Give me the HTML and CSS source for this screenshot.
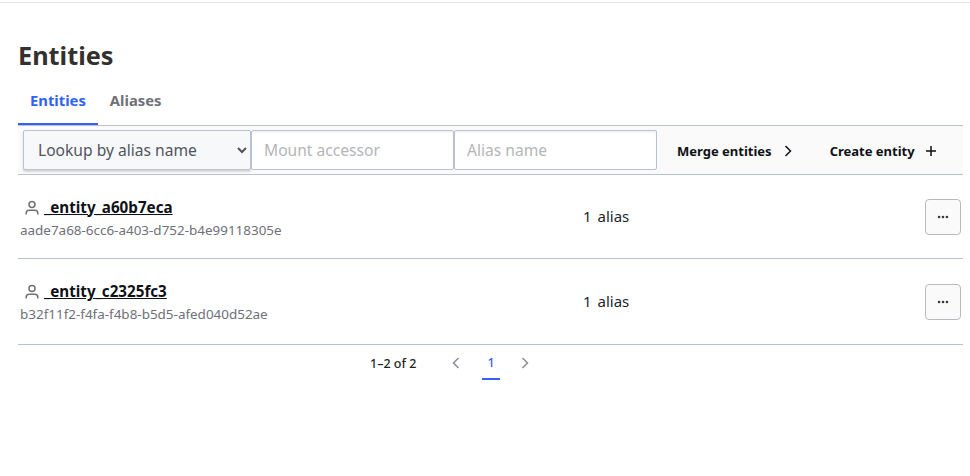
FILE: index.html
```html
<!DOCTYPE html>
<html lang="en">
<head>
<meta charset="utf-8">
<title>Entities</title>
<link rel="stylesheet" href="styles.css">
</head>
<body>
<main class="page">
  <h1 class="title">Entities</h1>
  <nav class="tabs">
    <a class="tab active">Entities</a>
    <a class="tab">Aliases</a>
  </nav>
  <div class="toolbar">
    <div class="filters">
      <select class="lookup"><option>Lookup by alias name</option></select>
      <input class="field" placeholder="Mount accessor">
      <input class="field" placeholder="Alias name">
    </div>
    <button class="action merge">Merge entities
      <svg class="action-icon" viewBox="0 0 16 16"><path d="M5.500 3l5 5-5 5" fill="none" stroke="currentColor" stroke-width="1.500"/></svg>
    </button>
    <button class="action create">Create entity
      <svg class="action-icon" viewBox="0 0 16 16"><path d="M8 3v10M3 8h10" fill="none" stroke="currentColor" stroke-width="1.500"/></svg>
    </button>
  </div>
  <div class="row">
    <div class="identity">
      <div class="name-line">
        <svg class="user" viewBox="0 0 16 16"><circle cx="8" cy="4.600" r="3" fill="none" stroke="currentColor" stroke-width="1.500"/><path d="M2.200 14.500v-1.300c0-1.700 1.300-2.900 3-2.900h5.600c1.700 0 3 1.200 3 2.900v1.300" fill="none" stroke="currentColor" stroke-width="1.500"/></svg>
        <a class="name">_entity_a60b7eca</a>
      </div>
      <div class="uuid">aade7a68-6cc6-a403-d752-b4e99118305e</div>
    </div>
    <div class="count">1 alias</div>
    <button class="more" aria-label="More"><svg viewBox="0 0 16 16"><circle cx="3.500" cy="8" r="1.500"/><circle cx="8" cy="8" r="1.500"/><circle cx="12.500" cy="8" r="1.500"/></svg></button>
  </div>
  <div class="row row-tall">
    <div class="identity">
      <div class="name-line">
        <svg class="user" viewBox="0 0 16 16"><circle cx="8" cy="4.600" r="3" fill="none" stroke="currentColor" stroke-width="1.500"/><path d="M2.200 14.500v-1.300c0-1.700 1.300-2.900 3-2.900h5.600c1.700 0 3 1.200 3 2.900v1.300" fill="none" stroke="currentColor" stroke-width="1.500"/></svg>
        <a class="name">_entity_c2325fc3</a>
      </div>
      <div class="uuid">b32f11f2-f4fa-f4b8-b5d5-afed040d52ae</div>
    </div>
    <div class="count">1 alias</div>
    <button class="more" aria-label="More"><svg viewBox="0 0 16 16"><circle cx="3.500" cy="8" r="1.500"/><circle cx="8" cy="8" r="1.500"/><circle cx="12.500" cy="8" r="1.500"/></svg></button>
  </div>
  <div class="pagination">
    <span class="range">1–2 of 2</span>
    <svg class="arrow" viewBox="0 0 16 16"><path d="M10.500 3L5.500 8l5 5" fill="none" stroke="currentColor" stroke-width="1.500"/></svg>
    <span class="page-num">1</span>
    <svg class="arrow" viewBox="0 0 16 16"><path d="M5.500 3l5 5-5 5" fill="none" stroke="currentColor" stroke-width="1.500"/></svg>
  </div>
</main>
</body>
</html>
```
FILE: styles.css
```css
* { box-sizing: border-box; }
html, body { margin: 0; padding: 0; background: #fff; }
body {
  width: 970px;
  height: 476px;
  overflow: hidden;
  font-family: "Noto Sans", sans-serif;
  color: #1d1f24;
  border-top: 1px solid #e4e5e8;
  margin-top: 2px;
}
.page { padding: 0 7px 0 18px; }
.title {
  margin: 32px 0 0;
  height: 40px;
  font-size: 25.300px;
  line-height: 40px;
  font-weight: 700;
  color: #33302d;
}
.tabs { display: flex; height: 49px; margin-top: 1px; }
.tab {
  display: block;
  height: 49px;
  padding: 0 12px;
  font-size: 14.800px;
  line-height: 49px;
  font-weight: 700;
  color: #6f7078;
}
.tab.active { color: #2f62f5; border-bottom: 2px solid #2f62f5; }
.toolbar {
  display: flex;
  align-items: center;
  height: 50px;
  background: #fafafb;
  border-top: 1px solid #bac1d3;
  border-bottom: 1px solid #bac1d3;
  padding-left: 5px;
}
.filters { display: flex; width: 634px; }
.lookup {
  width: 228px;
  height: 40px;
  padding: 0 10px;
  font: 400 15.600px "Noto Sans", sans-serif;
  color: #51545d;
  background: #f7f8fa;
  border: 1px solid #bac1d3;
  border-radius: 2px;
  box-shadow: 0 2px 2px rgba(60,60,70,.2);
}
.field {
  width: 203px;
  height: 40px;
  padding: 0 12px;
  font: 400 15.600px "Noto Sans", sans-serif;
  background: #fff;
  border: 1px solid #bac1d3;
  border-radius: 2px;
  box-shadow: inset 0 2px 2px rgba(60,60,70,.06);
}
.field::placeholder { color: #b4b5b9; opacity: 1; }
.action {
  display: flex;
  align-items: center;
  padding: 2px 0 0;
  font: 700 13px "Noto Sans", sans-serif;
  color: #0e1116;
  background: none;
  border: 0;
}
.merge { margin-left: 20px; gap: 8px; }
.create { margin-left: 34px; gap: 8px; }
.action-icon { width: 16px; height: 16px; }
.row {
  display: flex;
  align-items: center;
  height: 84px;
  border-bottom: 1px solid #bac1d3;
}
.row-tall { height: 86px; }
.identity { width: 565px; padding-left: 2px; padding-top: 2px; }
.row-tall .identity { padding-top: 1px; }
.name-line { display: flex; align-items: center; height: 22px; }
.user { width: 16px; height: 16px; margin: 2px 0 0 4px; color: #6f7078; }
.name {
  margin-left: 4px;
  font-size: 15.200px;
  font-weight: 700;
  color: #0e1116;
  text-decoration: underline;
}
.uuid { padding-top: 2px; font-size: 13.450px; line-height: 20px; color: #6f7078; }
.count { flex: 1; padding-bottom: 2px; font-size: 15px; word-spacing: 2px; color: #22252b; }
.more {
  display: flex;
  align-items: center;
  justify-content: center;
  width: 36px;
  height: 36px;
  margin-right: 2px;
  padding: 0;
  background: #fafafb;
  border: 1px solid #b8b9bf;
  border-radius: 4px;
}
.more svg { width: 14px; height: 14px; fill: #3a3c42; }
.pagination {
  display: flex;
  align-items: center;
  height: 36px;
  padding-left: 352px;
  font-size: 12.500px;
  font-weight: 500;
}
.range { width: 78px; }
.arrow { width: 16px; height: 16px; color: #8a8c98; }
.page-num {
  width: 18px;
  height: 34px;
  margin: 0 17px 0 18px;
  line-height: 34px;
  text-align: center;
  color: #2f62f5;
  border-bottom: 2px solid #2f62f5;
}
```
